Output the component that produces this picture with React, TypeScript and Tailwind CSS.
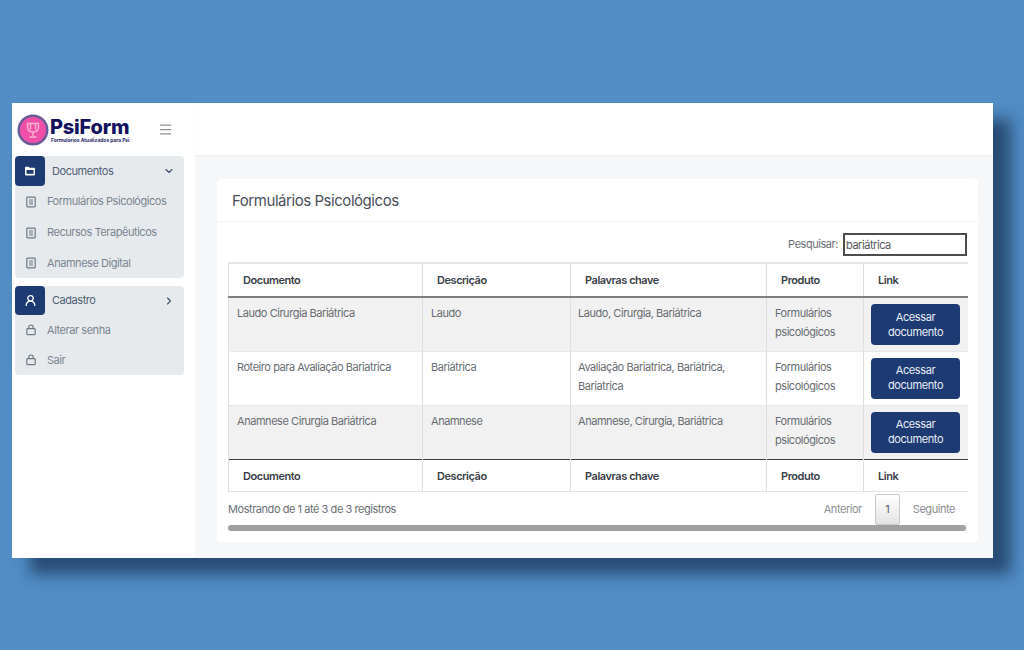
import React from 'react';
import { ChevronDown, ChevronRight, Menu, UserRound } from 'lucide-react';

const font = "font-['Inter','Noto_Sans',sans-serif]";

const rows = [
  {
    doc: 'Laudo Cirurgia Bariátrica',
    desc: 'Laudo',
    tags: 'Laudo, Cirurgia, Bariátrica',
    shade: true,
  },
  {
    doc: 'Roteiro para Avaliação Bariatrica',
    desc: 'Bariátrica',
    tags: 'Avaliação Bariatrica, Bariátrica, Bariatrica',
    shade: false,
  },
  {
    doc: 'Anamnese Cirurgia Bariátrica',
    desc: 'Anamnese',
    tags: 'Anamnese, Cirurgia, Bariátrica',
    shade: true,
  },
];

const headers = ['Documento', 'Descrição', 'Palavras chave', 'Produto', 'Link'];

const DocIcon = () => (
  <svg width="12" height="12" viewBox="0 0 12 12" fill="none" stroke="#6f7a85" strokeWidth="1.2" className="shrink-0">
    <rect x="1.8" y="1.2" width="8.4" height="9.6" rx="0.8" />
    <path d="M4 4h4M4 6h4M4 8h4" />
  </svg>
);

const LockIcon = () => (
  <svg width="12" height="12" viewBox="0 0 12 12" fill="none" stroke="#6f7a85" strokeWidth="1.2" className="shrink-0">
    <rect x="1.8" y="4.6" width="8.4" height="6" rx="0.8" />
    <path d="M3.800 4.600V3.200a2.200 2.200 0 0 1 4.400 0v1.400" />
  </svg>
);

const FolderIcon = () => (
  <svg width="12" height="12" viewBox="0 0 12 12" className="shrink-0">
    <path d="M1 2.500a.8.8 0 0 1 .8-.8h2.700l1 1.100h4.700a.8.8 0 0 1 .8.8v6a.8.8 0 0 1-.8.8H1.800a.8.8 0 0 1-.8-.8z" fill="#fff" />
    <rect x="2.500" y="5" width="7" height="3.800" fill="#1d3a72" />
  </svg>
);

const Logo = () => (
  <svg width="32" height="32" viewBox="0 0 32 32" className="shrink-0">
    <circle cx="16" cy="16" r="15.500" fill="#6a5a96" />
    <circle cx="16" cy="16" r="13" fill="#f04fa8" />
    <path d="M10.500 9.500h11v3c0 3.500-2.200 5.500-5.500 5.500s-5.500-2-5.500-5.500z" fill="none" stroke="#f8b4d6" strokeWidth="1.400" />
    <path d="M13.500 9.500v6M18.500 9.500v6M16 18v4M12.500 23h7" fill="none" stroke="#f8b4d6" strokeWidth="1.400" />
  </svg>
);

const SubItem = ({ icon, label, tall }: { icon: React.ReactNode; label: string; tall?: boolean }) => (
  <div className={`flex items-center gap-[10px] pl-[10px] text-[11px] text-[#7c858f] ${tall ? 'h-[31px]' : 'h-[30px]'}`}>
    {icon}
    <span>{label}</span>
  </div>
);

const Sidebar = () => (
  <aside className="w-[183px] shrink-0 bg-white">
    <div className="flex h-[53px] items-center pl-[5px]">
      <Logo />
      <div className="ml-[1px] flex flex-col">
        <span className="text-[20px] leading-[20px] font-extrabold tracking-[-0.2px] text-[#14125e]">PsiForm</span>
        <span className="pl-[1px] text-[5px] leading-[6px] font-bold tracking-[-0.05px] text-[#2b2a6b]">
          Formulários Atualizados para Psi
        </span>
      </div>
      <Menu size={15} strokeWidth={2} className="mb-[1px] ml-[29px] text-[#8f8f8f]" />
    </div>
    <div className="ml-[3px] w-[169px] rounded-[4px] bg-[#e6eaed]">
      <div className="flex h-[30px] items-center">
        <div className="flex h-[30px] w-[30px] items-center justify-center rounded-[4px] bg-[#1d3a72]">
          <FolderIcon />
        </div>
        <span className="ml-[7px] flex-1 text-[11px] text-[#4f5f78]">Documentos</span>
        <ChevronDown size={12} strokeWidth={2.2} className="mr-[9px] text-[#3d4e6b]" />
      </div>
      <SubItem icon={<DocIcon />} label="Formulários Psicológicos" tall />
      <SubItem icon={<DocIcon />} label="Recursos Terapêuticos" tall />
      <SubItem icon={<DocIcon />} label="Anamnese Digital" />
    </div>
    <div className="mt-[8px] ml-[3px] w-[169px] rounded-[4px] bg-[#e6eaed]">
      <div className="flex h-[29px] items-center">
        <div className="flex h-[29px] w-[30px] items-center justify-center rounded-[4px] bg-[#1d3a72]">
          <UserRound size={13} strokeWidth={2.4} className="text-white" />
        </div>
        <span className="ml-[7px] flex-1 text-[11px] text-[#4f5f78]">Cadastro</span>
        <ChevronRight size={12} strokeWidth={2.2} className="mr-[9px] text-[#3d4e6b]" />
      </div>
      <SubItem icon={<LockIcon />} label="Alterar senha" />
      <SubItem icon={<LockIcon />} label="Sair" />
    </div>
  </aside>
);

const DataTable = () => (
  <table className="w-[739px] table-fixed border-collapse text-[11px]">
    <colgroup>
      <col className="w-[194px]" />
      <col className="w-[148px]" />
      <col className="w-[196px]" />
      <col className="w-[97px]" />
      <col className="w-[104px]" />
    </colgroup>
    <thead>
      <tr className="h-[34px] border-t-2 border-b-2 border-t-[#e2e4e7] border-b-[#7d7f82]">
        {headers.map((h) => (
          <th key={h} className="border-l border-[#dcdfe3] pl-[14px] text-left font-semibold text-[#3a4048]">
            {h}
          </th>
        ))}
      </tr>
    </thead>
    <tbody>
      {rows.map((r) => (
        <tr
          key={r.doc}
          className={`h-[54px] border-b border-[#e6e8ea] text-[#686d72] last:border-b-0 ${r.shade ? 'bg-[#f1f1f1]' : 'bg-white'}`}
        >
          <td className="border-l border-[#dcdfe3] pt-[6px] pl-[8px] align-top leading-[19px]">{r.doc}</td>
          <td className="border-l border-[#dcdfe3] pt-[6px] pl-[8px] align-top leading-[19px]">{r.desc}</td>
          <td className="border-l border-[#dcdfe3] pt-[6px] pr-[24px] pl-[7px] align-top leading-[19px]">{r.tags}</td>
          <td className="border-l border-[#dcdfe3] pt-[6px] pl-[8px] align-top leading-[19px]">
            Formulários psicológicos
          </td>
          <td className="border-l border-[#dcdfe3] pt-[6px] pl-[7px] align-top">
            <button
              type="button"
              className="flex h-[41px] w-[89px] items-center justify-center rounded-[4px] bg-[#1d3a72] text-center text-[11px] leading-[15px] tracking-[-0.4px] text-[#e8edf6]"
            >
              Acessar documento
            </button>
          </td>
        </tr>
      ))}
    </tbody>
    <tfoot>
      <tr className="h-[32px] border-t border-b border-t-[#3a3c3e] border-b-[#e2e4e7]">
        {headers.map((h) => (
          <th key={h} className="border-l border-[#dcdfe3] pt-[3px] pl-[14px] text-left font-semibold text-[#3a4048]">
            {h}
          </th>
        ))}
      </tr>
    </tfoot>
  </table>
);

const App = () => (
  <div className={`h-[650px] w-[1024px] overflow-hidden bg-[#528dc5] pt-[103px] pl-[12px] tracking-[-0.45px] ${font}`}>
    <div className="flex h-[455px] w-[981px] shadow-[18px_16px_14px_rgba(25,55,90,0.75)]">
      <Sidebar />
      <main className="flex min-w-0 flex-1 flex-col bg-[#f5f7f8]">
        <div className="h-[52px] bg-white shadow-[0_1px_4px_rgba(0,0,0,0.03)]" />
        <section className="mt-[24px] ml-[22px] h-[363px] w-[761px] rounded-[4px] bg-white">
          <h1 className="flex h-[43px] items-center border-b border-[#f3f4f5] pt-[3px] pl-[15px] text-[15px] text-[#4a4f57]">
            Formulários Psicológicos
          </h1>
          <div className="flex h-[40px] items-center justify-end pt-[5px] pr-[11px] text-[11px] text-[#6a6f75]">
            <span className="mr-[5px]">Pesquisar:</span>
            <input
              readOnly
              value="bariátrica"
              className="h-[23px] w-[124px] border-2 border-[#4a4c4e] bg-white pl-[1px] text-[11px] text-[#55595e] outline-none"
            />
          </div>
          <div className="ml-[11px] w-[739px]">
            <DataTable />
            <div className="relative flex h-[33px] items-center pt-[2px] text-[11px] text-[#6a6f75]">
              <span>Mostrando de 1 até 3 de 3 registros</span>
              <div className="ml-auto flex items-center pr-[12px] text-[#8a8e93]">
                <span className="mr-[13px]">Anterior</span>
                <span className="relative z-10 flex h-[31px] w-[25px] items-center justify-center rounded-[2px] border border-[#c9c9c9] bg-gradient-to-b from-white to-[#e4e4e4] text-[#55595e]">
                  1
                </span>
                <span className="ml-[13px]">Seguinte</span>
              </div>
            </div>
            <div className="h-[6px] w-[738px] rounded-full bg-[#a0a0a0]" />
          </div>
        </section>
      </main>
    </div>
  </div>
);

export default App;
